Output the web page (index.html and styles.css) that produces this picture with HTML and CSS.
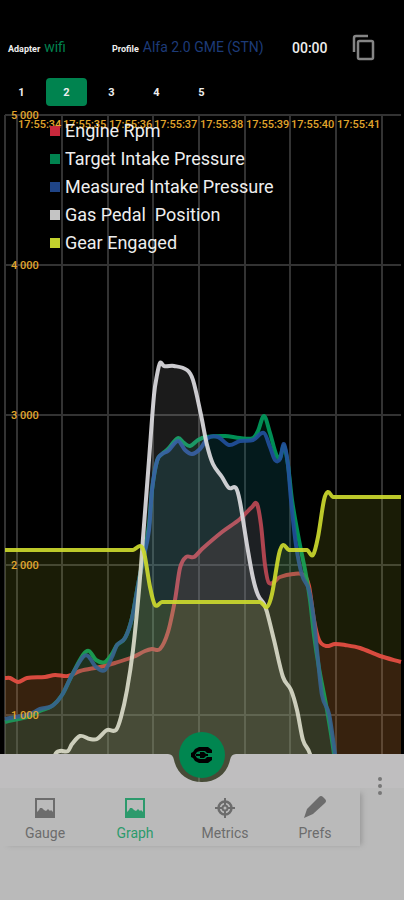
FILE: index.html
```
<!DOCTYPE html>
<html lang="en">
<head>
  <meta charset="UTF-8">
  <meta name="viewport" content="width=device-width, initial-scale=1.0">
  <title>Graph</title>
  <link rel="stylesheet" href="styles.css">
</head>
<body>
  <header class="status">
    <div class="status-item adapter"><span class="label">Adapter</span> <span class="wifi">wifi</span></div>
    <div class="status-item profile"><span class="label">Profile</span> <span class="car">Alfa 2.0 GME (STN)</span></div>
    <time class="timer">00:00</time>
    <button class="icon-btn" aria-label="Copy">
      <svg width="28" height="28" viewBox="0 0 28 28" fill="none" stroke="#858585" stroke-width="2.500">
        <path d="M4 18V4Q4 2 6 2H18"/>
        <rect x="8" y="7" width="15" height="18" rx="1.500"/>
      </svg>
    </button>
  </header>

  <nav class="pages">
    <button>1</button>
    <button class="active">2</button>
    <button>3</button>
    <button>4</button>
    <button>5</button>
  </nav>

  <main class="chart">
    <svg class="plot" viewBox="0 110 404 680">
      <g id="grid" class="grid"></g>
      <g id="series"></g>
      <g id="axis" class="axis"></g>
    </svg>
    <ul class="legend">
      <li><i class="swatch rpm"></i>Engine Rpm</li>
      <li><i class="swatch target"></i>Target Intake Pressure</li>
      <li><i class="swatch measured"></i>Measured Intake Pressure</li>
      <li><i class="swatch gas"></i>Gas Pedal&nbsp; Position</li>
      <li><i class="swatch gear"></i>Gear Engaged</li>
    </ul>
  </main>

  <footer class="dock">
    <div class="dock-top">
      <div class="dock-edge"></div>
      <svg class="notch" width="72" height="34" viewBox="0 0 72 34">
        <path class="notch-fill" d="M0 0H2Q7 0 8 6C11 20 22 28 36 28S61 20 64 6Q65 0 70 0H72V34H0Z"/>
      </svg>
      <div class="dock-edge"></div>
      <button class="fab" aria-label="Connect">
        <svg width="24" height="18" viewBox="0 0 24 18">
          <path fill-rule="evenodd" d="M9 1H18L22 4V7H17L15 5H10L7 6L5 9L7 12L10 13H15L17 11H22V14L18 17H9L5 15L3 12L1 11V7L3 6L5 3Z"/>
          <path d="M6 8H10V6H14L16 8H18V10H16L14 12H10V10H6Z"/>
        </svg>
      </button>
    </div>
    <div class="dock-body">
      <nav class="menu">
        <a href="#gauge">
          <svg width="20" height="20" viewBox="0 0 20 20"><path fill-rule="evenodd" d="M0 0H20V20H0ZM2 2V14L4 12L5 10L7 10L9 12L11 13L13 11L15 13L16 12L18 14V2Z"/></svg>
          Gauge
        </a>
        <a href="#graph" class="active">
          <svg width="20" height="20" viewBox="0 0 20 20"><path fill-rule="evenodd" d="M0 0H20V20H0ZM2 2V14L4 12L5 10L7 10L9 12L11 13L13 11L15 13L16 12L18 14V2Z"/></svg>
          Graph
        </a>
        <a href="#metrics">
          <svg class="outlined" width="20" height="20" viewBox="0 0 20 20">
            <circle cx="10" cy="10" r="6.500" stroke-width="2.500"/>
            <circle cx="10" cy="10" r="2.500" stroke-width="2"/>
            <path stroke-width="2" d="M10 0V8M10 12V20M0 10H8M12 10H20"/>
          </svg>
          Metrics
        </a>
        <a href="#prefs">
          <svg width="24" height="22" viewBox="0 0 24 22"><path d="M1 22L4 13L16 1Q18 -1 20 1L22 3Q24 5 22 7L10 18Z"/></svg>
          Prefs
        </a>
      </nav>
      <button class="more" aria-label="More options">
        <svg width="6" height="18" viewBox="0 0 6 18"><circle cx="3" cy="2" r="2"/><circle cx="3" cy="9" r="2"/><circle cx="3" cy="16" r="2"/></svg>
      </button>
    </div>
  </footer>

  <script src="chart.js"></script>
</body>
</html>
```

FILE: styles.css
```
* {
  box-sizing: border-box;
}
body {
  margin: 0;
  min-height: 100vh;
  display: flex;
  flex-direction: column;
  background: #000;
  color: #eee;
  font-family: Roboto, sans-serif;
}
button {
  border: none;
  padding: 0;
  background: none;
  color: inherit;
  font-family: inherit;
  cursor: pointer;
}

/* header */
.status {
  display: flex;
  align-items: center;
  height: 32px;
  margin-top: 32px;
  padding: 0 26px 0 8px;
  white-space: nowrap;
}
.status-item {
  line-height: 20px;
}
.adapter {
  flex: 104;
}
.profile {
  flex: 180;
}
.label {
  font-size: 9px;
  font-weight: bold;
}
.wifi {
  font-size: 14px;
  color: #00834f;
}
.car {
  font-size: 14px;
  color: #1d3b78;
}
.timer {
  flex: 58;
  font-size: 14px;
  font-weight: 500;
}
.icon-btn {
  width: 28px;
  height: 28px;
}

.pages {
  display: flex;
  gap: 4px;
  padding: 14px 1px 4px;
}
.pages button {
  width: 41px;
  height: 28px;
  border-radius: 4px;
  font-size: 11px;
  font-weight: bold;
}
.pages .active {
  background: #00834f;
}

/* chart */
.chart {
  position: relative;
}
.plot {
  display: block;
  width: 100%;
}
.grid path {
  fill: none;
  stroke: #333;
  stroke-width: 2;
}
.axis text {
  fill: #e0a52c;
  font-size: 11px;
  font-weight: 500;
}
.line {
  fill: none;
  stroke-width: 4;
  stroke-linejoin: round;
}
.legend {
  position: absolute;
  top: 7px;
  left: 50px;
  margin: 0;
  padding: 0;
  list-style: none;
  font-size: 18px;
  line-height: 28px;
}
.legend li {
  display: flex;
  align-items: center;
  gap: 5px;
}
.swatch {
  width: 10px;
  height: 10px;
}
.rpm { background: #c9283c; }
.target { background: #00834f; }
.measured { background: #1f4486; }
.gas { background: #c4c4c4; }
.gear { background: #c3d22d; }

/* bottom bar */
.dock {
  position: relative;
  flex: 1;
  display: flex;
  flex-direction: column;
  margin-top: -36px;
  color: #6c6c6c;
}
.dock-top {
  position: relative;
  display: flex;
  height: 34px;
}
.dock-edge {
  flex: 1;
  background: #bfbebf;
}
.notch-fill {
  fill: #bfbebf;
}
.fab {
  position: absolute;
  top: -22px;
  left: 50%;
  width: 46px;
  height: 46px;
  margin-left: -23px;
  border-radius: 50%;
  background: #008650;
  display: grid;
  place-items: center;
}
.dock-body {
  flex: 1;
  display: flex;
  align-items: flex-start;
  background: #bababa;
}
.menu {
  flex: 1;
  display: flex;
  height: 58px;
  background: #bababa;
  box-shadow: 5px 2px 5px -3px #999;
}
.menu a {
  flex: 1;
  display: flex;
  flex-direction: column;
  align-items: center;
  justify-content: flex-end;
  gap: 7px;
  padding-bottom: 5px;
  color: #6c6c6c;
  font-size: 14px;
  line-height: 16px;
  text-decoration: none;
}
.menu svg {
  fill: currentColor;
}
.menu .outlined {
  fill: none;
  stroke: currentColor;
}
.menu a.active {
  color: #2c9a6c;
}
.more {
  width: 44px;
  height: 20px;
  margin-top: -12px;
  padding-right: 4px;
  position: relative;
}
.more svg {
  display: block;
  margin: auto;
  fill: #777;
}
```

FILE: chart.js
```
const LEFT = 5;
const RIGHT = 401;
const BOTTOM = 790;
const ROWS = [115, 265, 415, 565, 715];
const COLS = [5, 17, 62, 108, 153, 199, 245, 290, 336, 382];

const series = [
  { color: '#ee3b48', fill: 0.14, points: [
    [5,678],[10,678],[18,682],[27,678],[45,677],[55,675],[68,676],[80,671],[100,667],[115,663],[133,657],[145,651],
    [152,649],[160,649],[168,632],[175,600],[180,568],[186,557],[194,557],[202,549],[222,532],[240,519],[252,507],
    [257,504],[261,525],[265,565],[269,583],[280,577],[293,574],[304,575],[309,586],[314,620],[319,640],[326,646],
    [335,644],[345,645],[360,648],[380,656],[401,662]] },
  { color: '#009a5c', fill: 0.12, points: [
    [5,722],[30,716],[40,711],[52,706],[62,695],[72,675],[83,655],[89,651],[96,660],[105,662],[112,654],[117,645],
    [125,638],[132,618],[138,585],[143,560],[149,525],[152,490],[157,461],[162,454],[168,449],[178,438],[184,443],
    [190,446],[198,440],[206,437],[225,436],[240,438],[253,438],[258,431],[264,416],[270,433],[276,454],[280,458],
    [284,446],[288,465],[292,500],[299,540],[306,575],[310,600],[314,635],[319,668],[327,710],[334,754],[338,790]] },
  { color: '#22509c', fill: 0.12, points: [
    [5,719],[30,714],[40,709],[52,706],[62,695],[72,675],[83,657],[88,656],[96,667],[105,670],[112,657],[117,645],
    [125,638],[132,618],[138,585],[143,560],[149,530],[152,490],[157,461],[162,454],[168,451],[178,441],[185,450],
    [192,454],[200,449],[208,438],[218,437],[229,445],[240,441],[253,440],[264,433],[270,447],[275,460],[280,459],
    [284,444],[288,465],[291,500],[296,545],[302,575],[309,590],[314,620],[317,650],[322,695],[329,714],[335,754],
    [339,790]] },
  { color: '#dcdbe0', fill: 0.12, points: [
    [45,790],[55,755],[60,751],[68,751],[72,744],[80,736],[90,739],[97,739],[107,730],[116,730],[121,717],[127,690],
    [133,650],[139,590],[144,525],[149,460],[154,395],[157,375],[160,363],[164,366],[174,366],[187,370],[193,380],
    [201,415],[207,445],[213,464],[222,477],[229,488],[236,488],[240,502],[247,545],[253,578],[258,595],[264,604],
    [267,612],[274,640],[283,677],[291,690],[297,710],[303,740],[310,754],[318,790]] },
  { color: '#ccd92e', fill: 0.13, points: [
    [5,550],[60,550],[133,550],[140,546],[144,552],[150,587],[155,605],[162,602],[200,602],[260,602],[267,607],
    [272,594],[279,554],[283,545],[289,550],[307,550],[313,555],[318,537],[324,500],[328,492],[333,497],[360,497],
    [401,497]] }
];

function smooth(points) {
  let d = `M${points[0]}`;
  for (let i = 0; i < points.length - 1; i++) {
    const a = points[i - 1] || points[i];
    const b = points[i];
    const c = points[i + 1];
    const e = points[i + 2] || c;
    // keep the handles short so that flat parts stay flat
    const reach = (c[0] - b[0]) / 3;
    const m1 = (c[1] - a[1]) / (c[0] - a[0]);
    const m2 = (e[1] - b[1]) / (e[0] - b[0]);
    const flat = b[1] === c[1] && c[0] - b[0] > 15;
    const y1 = flat ? b[1] : b[1] + m1 * reach;
    const y2 = flat ? c[1] : c[1] - m2 * reach;
    d += `C${b[0] + reach},${y1} ${c[0] - reach},${y2} ${c[0]},${c[1]}`;
  }
  return d;
}

let grid = '';
ROWS.forEach(y => grid += `M${LEFT} ${y}H${RIGHT}`);
COLS.forEach(x => grid += `M${x} ${ROWS[0]}V${BOTTOM}`);
document.getElementById('grid').innerHTML = `<path d="${grid}"/>`;

document.getElementById('series').innerHTML = series.map(s => {
  const line = smooth(s.points);
  const first = s.points[0][0];
  const last = s.points[s.points.length - 1][0];
  return `<path class="line" d="${line}" stroke="${s.color}" stroke-opacity="0.92"/>
    <path d="${line}L${last},${BOTTOM}L${first},${BOTTOM}Z" fill="${s.color}" fill-opacity="${s.fill}"/>`;
}).join('');

let labels = '';
ROWS.forEach((y, i) => labels += `<text x="11" y="${y + 4}">${5 - i} 000</text>`);
for (let i = 0; i < 8; i++) {
  labels += `<text x="${COLS[i + 1] + 1}" y="128">17:55:${34 + i}</text>`;
}
document.getElementById('axis').innerHTML = labels;
```
